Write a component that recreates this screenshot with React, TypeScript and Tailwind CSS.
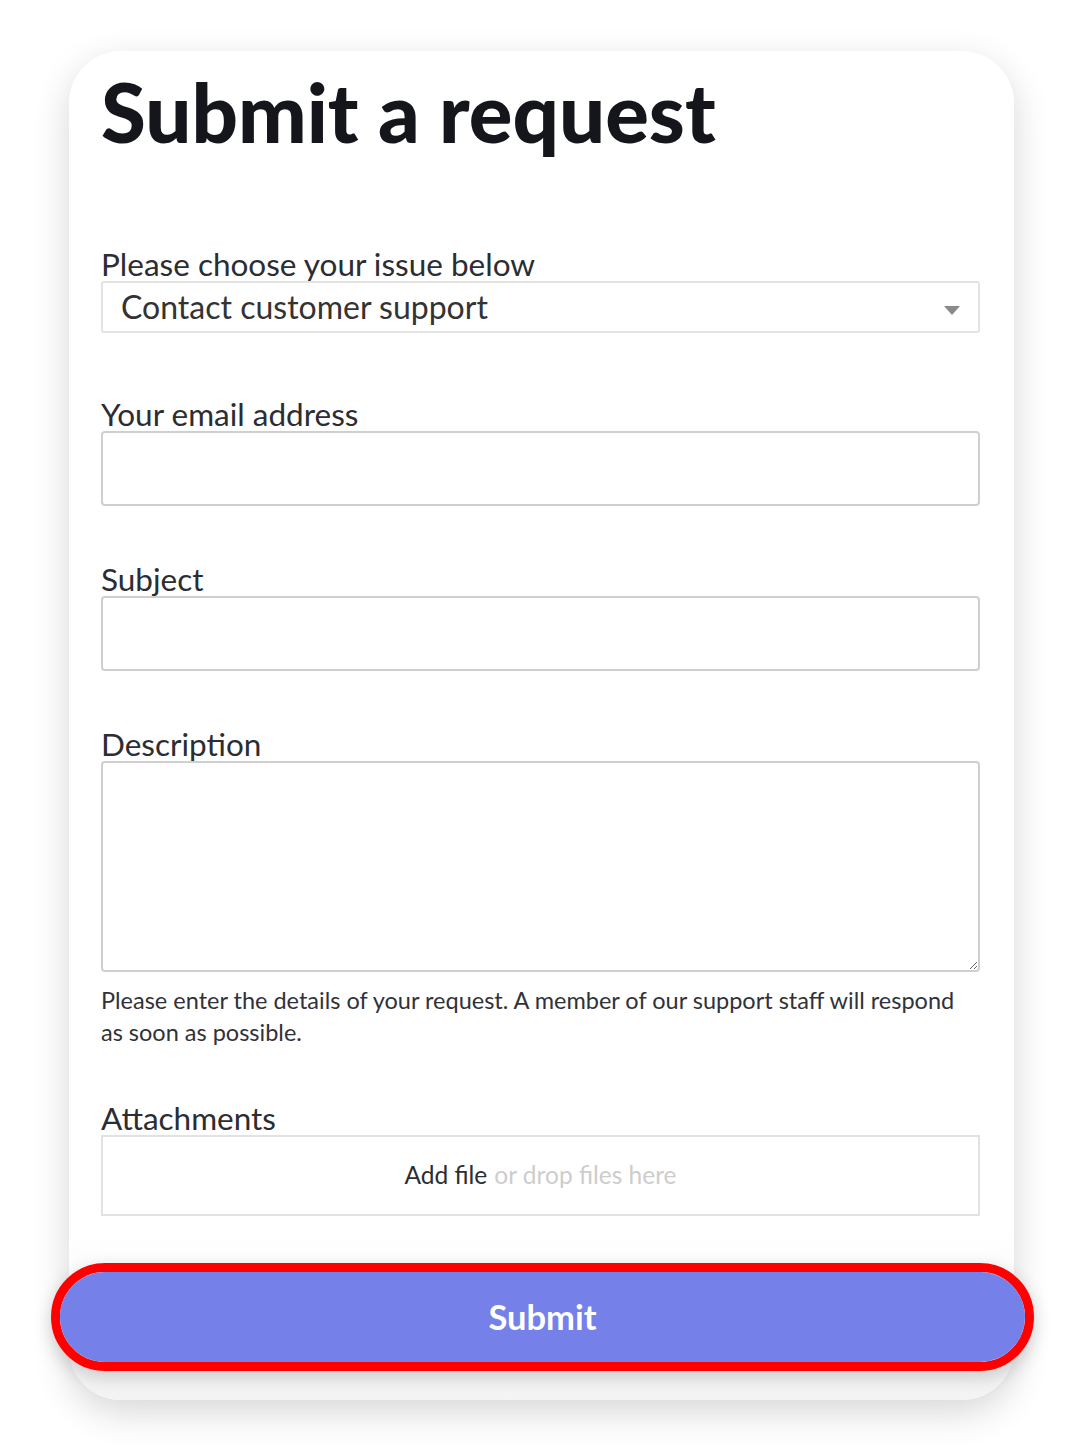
import { useState } from 'react';

const labelCls = 'block text-[31.5px] leading-[34px] text-[#2b2d33]';
const inputCls =
    'w-full border-2 border-[#cfcfcf] rounded-[4px] bg-white outline-none px-4 text-[26px] text-[#333]';

export default function App() {
    const [issue, setIssue] = useState('Contact customer support');
    const [email, setEmail] = useState('');
    const [subject, setSubject] = useState('');
    const [description, setDescription] = useState('');

    return (
        <div className="min-h-[1452px] bg-white pt-[51px] pl-[69px] font-['Lato',sans-serif]">
            <div className="w-[945px] h-[1349px] rounded-[52px] bg-white shadow-[0_12px_36px_rgba(0,0,0,0.16)] flex flex-col">
                <div className="px-[32px] pr-[34px]">
                    <h1 className="mt-[21px] text-[81.5px] leading-[80px] font-black text-[#14161c]">
                        Submit a request
                    </h1>

                    <form className="mt-[95px]" onSubmit={(e) => e.preventDefault()}>
                        <label className={labelCls}>Please choose your issue below</label>
                        <div className="relative">
                            <select
                                value={issue}
                                onChange={(e) => setIssue(e.target.value)}
                                className="w-full h-[52px] appearance-none border-2 border-[#e3e3e3] rounded-[3px] bg-white pl-[18px] text-[32px] text-[#333] outline-none"
                            >
                                <option>Contact customer support</option>
                                <option>Report a problem</option>
                                <option>Billing question</option>
                            </select>
                            <svg
                                className="absolute right-[20px] top-[25px] w-[16px] h-[9px] pointer-events-none"
                                viewBox="0 0 16 9"
                            >
                                <path d="M0 0h16L8 9z" fill="#8a8a8a" />
                            </svg>
                        </div>

                        <label className={`${labelCls} mt-[64px]`}>Your email address</label>
                        <input
                            type="email"
                            value={email}
                            onChange={(e) => setEmail(e.target.value)}
                            className={`${inputCls} h-[75px]`}
                        />

                        <label className={`${labelCls} mt-[56px]`}>Subject</label>
                        <input
                            type="text"
                            value={subject}
                            onChange={(e) => setSubject(e.target.value)}
                            className={`${inputCls} h-[75px]`}
                        />

                        <label className={`${labelCls} mt-[56px]`}>Description</label>
                        <textarea
                            value={description}
                            onChange={(e) => setDescription(e.target.value)}
                            className={`${inputCls} h-[211px] py-3 block`}
                        />
                        <p className="mt-[12px] pr-[10px] text-[23.5px] leading-[32px] text-[#303238]">
                            Please enter the details of your request. A member of our support staff will respond
                            as soon as possible.
                        </p>

                        <label className={`${labelCls} mt-[53px]`}>Attachments</label>
                        <div className="h-[81px] border-2 border-[#e2e2e2] flex items-center justify-center text-[24.5px]">
                            <span className="text-[#2b2d33]">Add file</span>
                            <span className="ml-[7px] text-[#cdcdcd]">or drop files here</span>
                        </div>
                    </form>
                </div>

                {/* footer strip behind the submit button */}
                <div className="mt-[16px] flex-1 rounded-b-[52px] bg-gradient-to-b from-white to-[#f3f3f3] pt-[31px]">
                    <div className="ml-[-18px] mr-[-20px] rounded-full border-[9px] border-[#ff0000] shadow-[0_6px_18px_rgba(0,0,0,0.18)]">
                        <button
                            type="submit"
                            className="w-full h-[90px] rounded-full bg-[#7580e8] text-white text-[34.5px] font-bold"
                        >
                            Submit
                        </button>
                    </div>
                </div>
            </div>
        </div>
    );
}
